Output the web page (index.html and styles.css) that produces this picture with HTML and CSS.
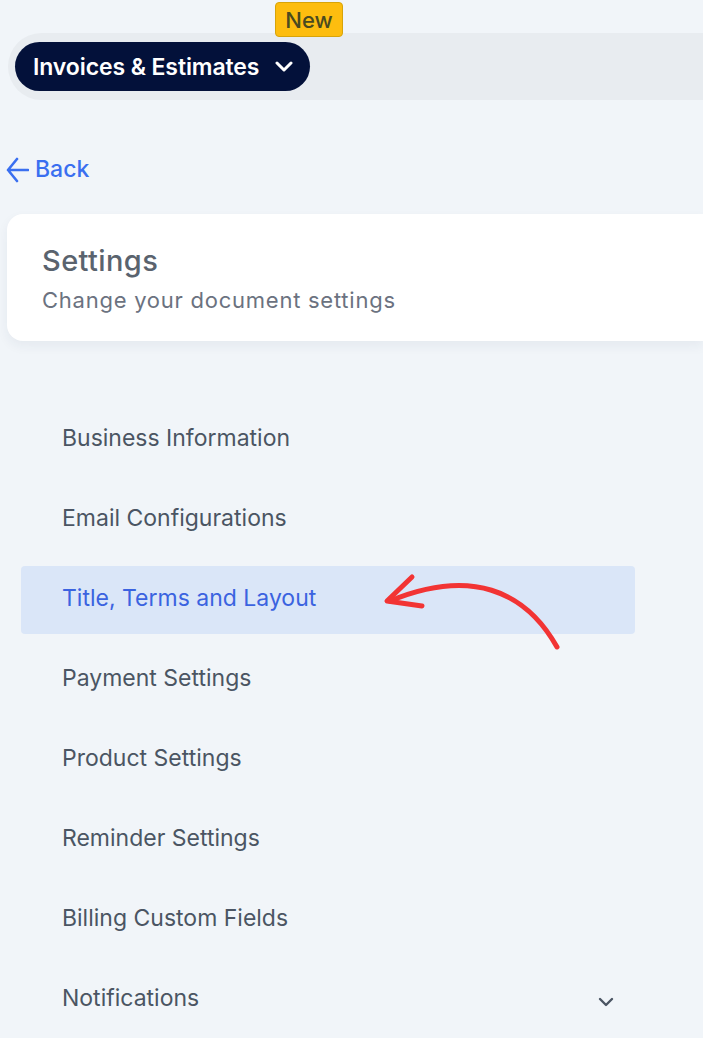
FILE: index.html
```html
<!DOCTYPE html>
<html>
<head>
<meta charset="utf-8">
<link rel="stylesheet" href="styles.css">
</head>
<body>
<div class="page">
  <div class="topbar">
    <div class="pill">
      <span>Invoices &amp; Estimates</span>
      <svg class="pill-chev" width="18" height="12" viewBox="0 0 18 12"><path d="M2 2 L9 9 L16 2" fill="none" stroke="#fff" stroke-width="3" stroke-linecap="round" stroke-linejoin="round"/></svg>
    </div>
    <span class="badge">New</span>
  </div>

  <a class="back">
    <svg width="24" height="28" viewBox="0 0 24 28"><path d="M12 3 L3 14 L12 25 M3 14 H23" fill="none" stroke="#3a6ff0" stroke-width="2.6" stroke-linecap="round" stroke-linejoin="round"/></svg>
    <span>Back</span>
  </a>

  <div class="card">
    <div class="card-title">Settings</div>
    <div class="card-sub">Change your document settings</div>
  </div>

  <ul class="menu">
    <li class="item">Business Information</li>
    <li class="item">Email Configurations</li>
    <li class="item active">Title, Terms and Layout</li>
    <li class="item">Payment Settings</li>
    <li class="item">Product Settings</li>
    <li class="item">Reminder Settings</li>
    <li class="item">Billing Custom Fields</li>
    <li class="item has-chev">Notifications
      <svg class="chev" width="18" height="12" viewBox="0 0 18 12"><path d="M3 3 L9 9 L15 3" fill="none" stroke="#4b5563" stroke-width="2.4" stroke-linecap="round" stroke-linejoin="round"/></svg>
    </li>
  </ul>

  <svg class="annot" width="703" height="1038" viewBox="0 0 703 1038">
    <path d="M557 647 C 525 590, 470 568, 390 601" fill="none" stroke="#f23434" stroke-width="5" stroke-linecap="round"/>
    <path d="M412 577 L387 601 L422 606" fill="none" stroke="#f23434" stroke-width="5" stroke-linecap="round" stroke-linejoin="round"/>
  </svg>
</div>
</body>
</html>
```

FILE: styles.css
```css
html, body {
  margin: 0;
  padding: 0;
}
body {
  background: #f1f5f9;
  font-family: Inter, "Noto Sans", "Liberation Sans", sans-serif;
  width: 703px;
  height: 1038px;
  overflow: hidden;
}
.page {
  position: relative;
  height: 1038px;
  box-sizing: border-box;
  padding-top: 33px;
}
.topbar {
  position: relative;
  margin: 0 0 0 8px;
  height: 67px;
  background: #e8ecf0;
  border-radius: 34px 0 0 34px;
  display: flex;
  align-items: center;
  padding-left: 7px;
}
.pill {
  height: 49px;
  width: 295px;
  box-sizing: border-box;
  background: #03113a;
  border-radius: 25px;
  display: flex;
  align-items: center;
  padding-left: 18px;
  gap: 16px;
  color: #fff;
  font-size: 23px;
  font-weight: 600;
  letter-spacing: -0.1px;
}
.pill-chev {
  margin-top: 1px;
}
.badge {
  position: absolute;
  left: 267px;
  top: -31px;
  width: 68px;
  height: 35px;
  box-sizing: border-box;
  background: #fdbd0f;
  border: 1px solid #d7a40a;
  border-radius: 4px;
  color: #4a4a20;
  font-size: 22px;
  font-weight: 500;
  display: flex;
  align-items: center;
  justify-content: center;
}
.back {
  display: flex;
  align-items: center;
  gap: 6px;
  margin: 55px 0 0 5px;
  height: 30px;
  color: #3a6ff0;
  font-size: 23px;
  font-weight: 500;
}
.back span {
  margin-top: -3px;
}
.card {
  margin: 29px 0 0 7px;
  height: 127px;
  box-sizing: border-box;
  background: #fff;
  border-radius: 16px 0 0 16px;
  box-shadow: 0 5px 12px rgba(30, 50, 80, 0.06);
  padding: 30px 0 0 35px;
}
.card-title {
  font-size: 29px;
  color: #5a636e;
  font-weight: 500;
  letter-spacing: 0.4px;
  line-height: 34px;
}
.card-sub {
  margin-top: 9px;
  font-size: 22px;
  color: #6b7280;
  letter-spacing: 0.75px;
  line-height: 26px;
}
.menu {
  list-style: none;
  margin: 65px 0 0 21px;
  padding: 0;
  width: 614px;
  display: flex;
  flex-direction: column;
  gap: 12px;
}
.item {
  height: 68px;
  box-sizing: border-box;
  display: flex;
  align-items: center;
  padding-left: 41px;
  padding-bottom: 5px;
  font-size: 23px;
  color: #4b5563;
  border-radius: 4px;
  position: relative;
}
.item.active {
  background: #dae6f8;
  color: #3b63e0;
}
.item.has-chev .chev {
  position: absolute;
  left: 576px;
  top: 30px;
}
.annot {
  position: absolute;
  left: 0;
  top: 0;
  pointer-events: none;
}
```
